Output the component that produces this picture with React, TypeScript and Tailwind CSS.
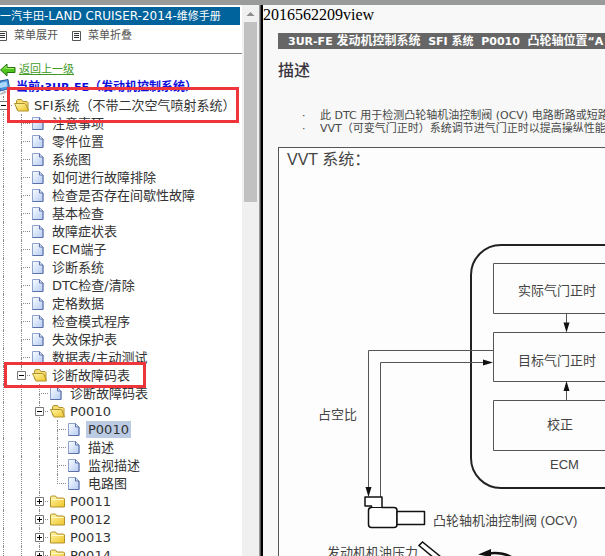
import React, { useState } from 'react';

interface TreeNode {
  label: string;
  children?: TreeNode[];
  open?: boolean;
  selected?: boolean;
  mark?: 'wide' | 'narrow';
}

const tree: TreeNode = {
  label: 'SFI系统（不带二次空气喷射系统）',
  open: true,
  mark: 'wide',
  children: [
    { label: '注意事项' },
    { label: '零件位置' },
    { label: '系统图' },
    { label: '如何进行故障排除' },
    { label: '检查是否存在间歇性故障' },
    { label: '基本检查' },
    { label: '故障症状表' },
    { label: 'ECM端子' },
    { label: '诊断系统' },
    { label: 'DTC检查/清除' },
    { label: '定格数据' },
    { label: '检查模式程序' },
    { label: '失效保护表' },
    { label: '数据表/主动测试' },
    {
      label: '诊断故障码表',
      open: true,
      mark: 'narrow',
      children: [
        { label: '诊断故障码表' },
        {
          label: 'P0010',
          open: true,
          children: [
            { label: 'P0010', selected: true },
            { label: '描述' },
            { label: '监视描述' },
            { label: '电路图' },
          ],
        },
        { label: 'P0011', children: [] },
        { label: 'P0012', children: [] },
        { label: 'P0013', children: [] },
        { label: 'P0014', children: [] },
      ],
    },
  ],
};

const FolderIcon = ({ open }: { open: boolean }) => (
  <svg width="18" height="18" viewBox="0 0 18 18" className="shrink-0" aria-hidden="true">
    <defs>
      <linearGradient id="folder" x1="0" y1="0" x2="1" y2="1">
        <stop offset="0" stopColor="#fff6a8" />
        <stop offset="1" stopColor="#efc426" />
      </linearGradient>
    </defs>
    {open ? (
      <>
        <path d="M4.500 13V5l1-1.500h4l1.500 2h4l1 1v8z" fill="#f4dc70" stroke="#b0922c" />
        <path d="M2.500 7.500h10l1.500 1 2.500 6.500H6z" fill="url(#folder)" stroke="#b0922c" />
      </>
    ) : (
      <>
        <path d="M2.500 15V5l1-1h4l1.500 2h6.500l1 1v8z" fill="url(#folder)" stroke="#b0922c" />
        <path d="M3.500 7.500h12" stroke="#fff9cf" />
      </>
    )}
  </svg>
);

const PageIcon = () => (
  <svg width="18" height="18" viewBox="0 0 18 18" className="shrink-0" aria-hidden="true">
    <defs>
      <linearGradient id="sheet" x1="0" y1="0" x2="1" y2="1">
        <stop offset="0.1" stopColor="#f4f8ff" />
        <stop offset="1" stopColor="#b4cbf2" />
      </linearGradient>
    </defs>
    <path d="M2.500 3.500h7l3.500 3.500v8.500H2.500z" fill="url(#sheet)" stroke="#8fa2cc" />
    <path d="M9.500 3.500V7H13v8.500H2.500" fill="none" stroke="#5c70a8" />
  </svg>
);

const ListIcon = ({ className }: { className?: string }) => (
  <svg width="9" height="10" viewBox="0 0 9 10" className={className} aria-hidden="true">
    <path d="M0.500 0.500h8v9h-8z" fill="#fff" stroke="#555" />
    <path d="M2 2.500h5M2 4.500h5M2 6.500h5" stroke="#333" />
  </svg>
);

const Guide = () => (
  <span className="flex w-[18px] shrink-0 self-stretch pl-[9px]">
    <span className="flex-1 border-l border-dotted border-[#8a8a8a]" />
  </span>
);

interface JunctionProps {
  last: boolean;
  expandable: boolean;
  open: boolean;
  label: string;
  onToggle: () => void;
}

const Junction = ({ last, expandable, open, label, onToggle }: JunctionProps) => (
  <span className="relative flex w-[18px] shrink-0 flex-col self-stretch pl-[9px]">
    <span className="flex-1 border-b border-l border-dotted border-[#8a8a8a]" />
    <span className={last ? 'h-[8px]' : 'h-[8px] border-l border-dotted border-[#8a8a8a]'} />
    {expandable && (
      <button
        onClick={onToggle}
        aria-label={`${open ? '折叠' : '展开'} ${label}`}
        className="absolute top-[5px] left-[5px] h-[9px] w-[9px]"
      >
        <svg width="9" height="9" viewBox="0 0 9 9" className="block">
          <path d="M0.500 0.500h8v8h-8z" fill="#fff" stroke="#777" />
          <path d={open ? 'M2 4.500h5' : 'M2 4.500h5M4.500 2v5'} stroke="#000" />
        </svg>
      </button>
    )}
  </span>
);

const TreeItem = ({ node, depth, last }: { node: TreeNode; depth: number; last: boolean }) => {
  const [open, setOpen] = useState(!!node.open);
  const expandable = !!node.children;

  return (
    <li>
      <div className="relative flex h-[18px] items-center">
        {Array.from({ length: depth }, (_, i) => (
          <Guide key={i} />
        ))}
        <Junction
          last={last}
          expandable={expandable}
          open={open}
          label={node.label}
          onToggle={() => setOpen(!open)}
        />
        {expandable ? <FolderIcon open={open} /> : <PageIcon />}
        <a
          href="#"
          className={`ml-[2px] px-[2px] leading-[17px] whitespace-nowrap ${node.selected ? 'bg-[#bccbe4]' : ''}`}
        >
          {node.label}
        </a>
        {node.mark === 'wide' && (
          <span className="pointer-events-none absolute -top-[9px] left-[13px] z-10 h-[36px] w-[232px] border-[3px] border-[#ee353b]" />
        )}
        {node.mark === 'narrow' && (
          <span className="pointer-events-none absolute -top-[4px] left-[10px] z-10 h-[26px] w-[142px] border-[3px] border-[#ee353b]" />
        )}
      </div>
      {expandable && open && (
        <ul>
          {node.children!.map((child, i) => (
            <TreeItem
              key={i}
              node={child}
              depth={depth + 1}
              last={i === node.children!.length - 1}
            />
          ))}
        </ul>
      )}
    </li>
  );
};

const Sidebar = () => (
  <nav className="flex w-[259px] shrink-0 bg-white">
    <div className="min-w-0 flex-1 overflow-hidden pt-[2px]">
      <h1 className="mr-[2px] h-[18px] bg-[#00639c] text-[12px] leading-[18px] whitespace-nowrap text-white">
        <span className="text-[11px]">一汽丰田</span>-LAND CRUISER-2014-
        <span className="text-[11px]">维修手册</span>
      </h1>
      <div className="flex h-[29px] items-center border-b border-[#808080] pb-[6px] text-[11px] text-[#555]">
        <button className="flex w-[74px] items-center">
          <ListIcon className="-ml-[2px]" />
          <span className="ml-[7px]">菜单展开</span>
        </button>
        <button className="flex items-center">
          <ListIcon className="-ml-[2px]" />
          <span className="ml-[7px]">菜单折叠</span>
        </button>
      </div>
      <div className="mt-[8px] flex h-[16px] items-center text-[11px]">
        <svg width="16" height="14" viewBox="0 0 16 14" aria-hidden="true">
          <path d="M0.500 7L7 1v3.500h8v5H7V13z" fill="#4fc41c" stroke="#24720f" />
          <path d="M3 6.500L6 3.500v2h8" fill="none" stroke="#a8ee6c" />
        </svg>
        <a href="#" className="ml-[3px] text-[#3f9a26] underline">返回上一级</a>
      </div>
      <div className="flex h-[18px] items-center text-[11px] font-bold whitespace-nowrap text-[#1010dc]">
        <svg width="10" height="16" viewBox="0 0 10 16" className="shrink-0" aria-hidden="true">
          <path d="M0 2l8-1.500 1.500 9L0 12z" fill="#4c94e0" stroke="#2c5c9c" />
          <path d="M0 4l6.500-1.500 1 5L0 9z" fill="#a8d8fa" />
          <path d="M0 14.500l5-3 2 1.500-4 2.500H0z" fill="#b8bcc4" />
        </svg>
        <p className="ml-[6px]">
          <span className="text-[12px]">当前</span>:3UR-FE
          <span className="text-[12px]">（发动机控制系统）</span>
        </p>
      </div>
      <ul className="-ml-[6px] text-[13px] text-[#333]">
        <TreeItem node={tree} depth={0} last={false} />
      </ul>
    </div>
    <div className="flex w-[17px] shrink-0 flex-col items-center bg-[#f0f0f0]">
      <svg width="9" height="17" viewBox="0 0 9 17" aria-hidden="true">
        <path d="M0.500 11L4.500 7l4 4z" fill="#8c8c8c" />
      </svg>
      <div className="h-[180px] w-[13px] bg-[#c1c1c1]" />
    </div>
  </nav>
);

const VvtDiagram = () => (
  <svg
    width="400"
    height="400"
    viewBox="279 174 400 400"
    className="block max-w-none"
    role="img"
    aria-label="VVT 系统"
  >
    {/* ECM and its blocks */}
    <g fill="none" stroke="#555">
      <rect x="471" y="245" width="190" height="243" rx="30" stroke="#222" strokeWidth="2" />
      <path d="M493.500 263.500h146v50h-146zM493.500 332.500h146v49h-146zM493.500 400.500h146v50h-146z" />
      <path d="M566.500 314v12M566.500 400v-12" />
      <path d="M493 350.500H368.500V490M380.500 497V362.500H486" />
    </g>
    <g fill="#111">
      <path d="M563.500 322.500h6l-3 10zM563.500 391h6l-3-10zM493 362.500l-10-3v6zM365.500 487h6l-3 10z" />
    </g>

    {/* oil control valve */}
    <g fill="#fff" stroke="#111" strokeWidth="1.500" strokeLinejoin="round">
      <path d="M365 497h17v10.500h12q3 0 3 3v14q0 3-3 3h-22.500q-3 0-3-3v-14q0-3 3-3v-1.500H365z" />
      <path d="M371 507.500h12" strokeWidth="1" />
      <path d="M397 511.500h27.500v13H397z" />
    </g>

    {/* oil pressure line and rotation arrow */}
    <path d="M434 558l-15-12.500 3.500-3.500 18 14.500" fill="#fff" stroke="#111" strokeWidth="1.500" />
    <path d="M488 553.500q14-2 24 4" fill="none" stroke="#111" strokeWidth="2.500" />
    <path d="M478 554.500l13-5.500v8z" fill="#111" />

    <g fill="#444" className="text-[13px]">
      <text x="518" y="295">实际气门正时</text>
      <text x="518" y="365">目标气门正时</text>
      <text x="547" y="429">校正</text>
      <text x="550" y="469">ECM</text>
      <text x="318" y="419">占空比</text>
      <text x="433" y="525">凸轮轴机油控制阀 (OCV)</text>
      <text x="327" y="557">发动机机油压力</text>
    </g>
  </svg>
);

const Content = () => (
  <main className="min-w-0 flex-1 overflow-hidden bg-[#f7f8f7]">
    <p className="h-[28px] font-['Liberation_Serif','Noto_Sans_CJK_SC',serif] text-[16px] leading-[19px] text-black">
      2016562209view
    </p>
    <div className="ml-[15px]">
      <h2 className="h-[16px] overflow-hidden bg-[#666] pl-[10px] text-[11px] leading-[16px] font-bold whitespace-pre text-white">
        {'3UR-FE '}
        <span className="text-[12px]">发动机控制系统</span>
        {'  SFI 系统  P0010  '}
        <span className="text-[12px]">凸轮轴位置</span>
        {'“A'}
      </h2>
      <h3 className="mt-[12px] text-[16px] leading-[20px] font-medium text-[#3a3440]">描述</h3>
      <ul className="mt-[28px] text-[11px] leading-[13px] whitespace-nowrap text-[#484848]">
        <li className="flex">
          <span className="w-[42px] shrink-0 pl-[24px]">·</span>
          此 DTC 用于检测凸轮轴机油控制阀 (OCV) 电路断路或短路
        </li>
        <li className="flex">
          <span className="w-[42px] shrink-0 pl-[24px]">·</span>
          VVT（可变气门正时）系统调节进气门正时以提高操纵性能
        </li>
      </ul>
      <section className="mt-[12px] overflow-hidden border-t border-l border-[#555] bg-[#fdfdfd] font-['Liberation_Sans','Noto_Sans_CJK_SC',sans-serif]">
        <h4 className="h-[26px] pl-[8px] text-[16px] leading-[24px] text-[#444]">VVT 系统：</h4>
        <VvtDiagram />
      </section>
    </div>
  </main>
);

const App: React.FC = () => {
  return (
    <div
      lang="zh-CN"
      className="flex h-screen overflow-hidden border-t-[5px] border-[#999b9a] bg-white font-['DejaVu_Sans','Noto_Sans_CJK_SC',sans-serif]"
    >
      <Sidebar />
      <div className="w-[4px] shrink-0 border-r-2 border-l border-r-black border-l-[#999] bg-[#555]" />
      <Content />
    </div>
  );
};

export default App;
